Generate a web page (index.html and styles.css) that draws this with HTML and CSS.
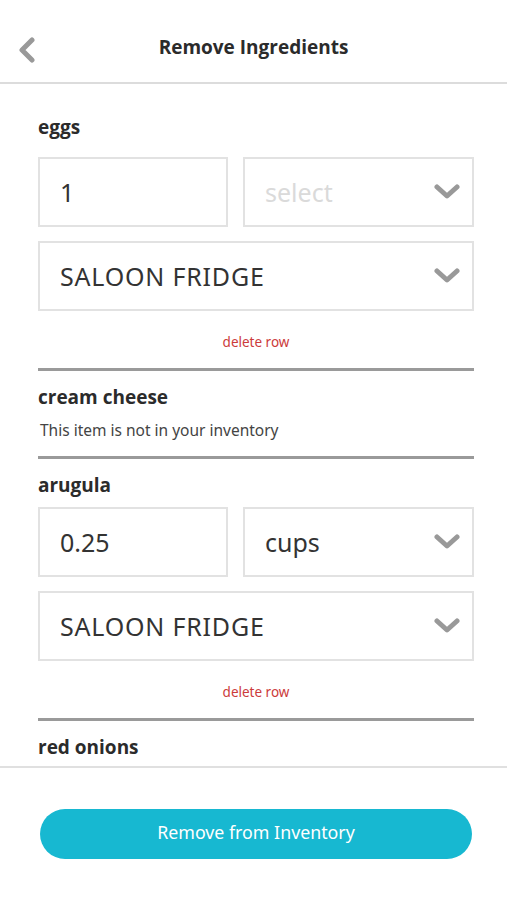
FILE: index.html
```html
<!DOCTYPE html>
<html>
<head>
<meta charset="utf-8">
<link rel="stylesheet" href="styles.css">
</head>
<body>
<div class="app">
  <header class="topbar">
    <svg class="back" width="20" height="26" viewBox="0 0 20 26"><path d="M15 3 L5 13 L15 23" fill="none" stroke="#999" stroke-width="5" stroke-linecap="round" stroke-linejoin="round"/></svg>
    <h1 class="title">Remove Ingredients</h1>
  </header>
  <main class="list">
    <section class="item item-first">
      <h2 class="name name-eggs">eggs</h2>
      <div class="row-two">
        <div class="box"><span class="val">1</span></div>
        <div class="box box-select"><span class="val placeholder">select</span><svg class="chev" width="26" height="16" viewBox="0 0 26 16"><path d="M3 3 L13 12 L23 3" fill="none" stroke="#999" stroke-width="5" stroke-linecap="round" stroke-linejoin="round"/></svg></div>
      </div>
      <div class="box box-select box-full"><span class="val caps">SALOON FRIDGE</span><svg class="chev" width="26" height="16" viewBox="0 0 26 16"><path d="M3 3 L13 12 L23 3" fill="none" stroke="#999" stroke-width="5" stroke-linecap="round" stroke-linejoin="round"/></svg></div>
      <div class="delete">delete row</div>
    </section>
    <section class="item">
      <h2 class="name">cream cheese</h2>
      <p class="note">This item is not in your inventory</p>
    </section>
    <section class="item">
      <h2 class="name">arugula</h2>
      <div class="row-two">
        <div class="box"><span class="val">0.25</span></div>
        <div class="box box-select"><span class="val">cups</span><svg class="chev" width="26" height="16" viewBox="0 0 26 16"><path d="M3 3 L13 12 L23 3" fill="none" stroke="#999" stroke-width="5" stroke-linecap="round" stroke-linejoin="round"/></svg></div>
      </div>
      <div class="box box-select box-full"><span class="val caps">SALOON FRIDGE</span><svg class="chev" width="26" height="16" viewBox="0 0 26 16"><path d="M3 3 L13 12 L23 3" fill="none" stroke="#999" stroke-width="5" stroke-linecap="round" stroke-linejoin="round"/></svg></div>
      <div class="delete">delete row</div>
    </section>
    <section class="item">
      <h2 class="name">red onions</h2>
    </section>
  </main>
  <footer class="footer">
    <button class="cta">Remove from Inventory</button>
  </footer>
</div>
</body>
</html>
```
FILE: styles.css
```css
* { box-sizing: border-box; }
html, body { margin: 0; padding: 0; background: #fff; }
body { font-family: "Noto Sans", "Open Sans", sans-serif; color: #333; }
.app { width: 507px; height: 900px; display: flex; flex-direction: column; }
.topbar {
  height: 84px;
  flex: none;
  border-bottom: 2px solid #dcdcdc;
  display: flex;
  align-items: center;
  justify-content: center;
  position: relative;
  padding-top: 12px;
}
.back { position: absolute; left: 17px; top: 37px; }
.title {
  margin: 0;
  font-family: "Open Sans", "Noto Sans", sans-serif;
  font-weight: 700;
  font-size: 19px;
  color: #2b2b2b;
}
.list {
  height: 684px;
  overflow: hidden;
  padding: 0 33px 0 38px;
  border-bottom: 2px solid #e0e0e0;
  flex: none;
}
.item {
  padding: 14px 0 16px;
  border-bottom: 3px solid #9a9a9a;
}
.item-first { padding-top: 31px; }
.item:last-child { border-bottom: none; padding-bottom: 0; }
.name {
  margin: 0;
  font-family: "Open Sans", "Noto Sans", sans-serif;
  font-weight: 700;
  font-size: 19px;
  line-height: 24px;
  height: 24px;
  color: #2b2b2b;
}
.name-eggs { margin-bottom: 18px; }
.note {
  margin: 11px 0 0;
  font-size: 15.5px;
  line-height: 20px;
  color: #444;
  padding-left: 2px;
}
.row-two {
  display: grid;
  grid-template-columns: 190px 1fr;
  gap: 15px;
  margin-top: 10px;
}
.box {
  height: 70px;
  border: 2px solid #e2e2e2;
  display: flex;
  align-items: center;
  justify-content: space-between;
  padding: 0 12px 0 20px;
}
.box-full { margin-top: 14px; }
.val {
  font-size: 25px;
  color: #333;
  line-height: 1;
}
.caps { letter-spacing: 0.8px; }
.placeholder { color: #dadada; }
.chev { flex: none; }
.delete {
  text-align: center;
  font-size: 13.5px;
  color: #cc3b3b;
  line-height: 20px;
  margin-top: 21px;
}
.footer {
  flex: 1;
  padding: 41px 35px 0 40px;
}
.cta {
  display: block;
  width: 432px;
  height: 50px;
  border: none;
  border-radius: 25px;
  background: #17b8d1;
  color: #fff;
  font-family: "Noto Sans", "Open Sans", sans-serif;
  font-size: 17.8px;
  padding: 0 0 4px;
}
```
